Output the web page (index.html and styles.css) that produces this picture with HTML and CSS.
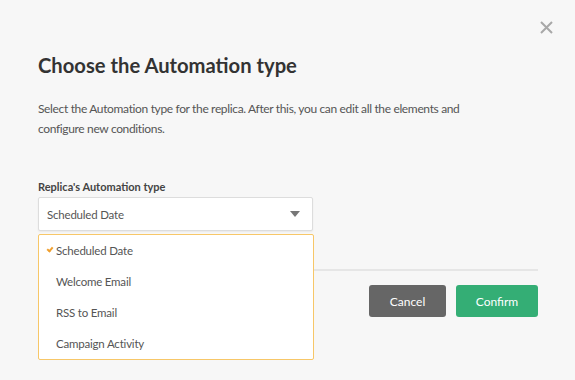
FILE: index.html
```html
<!DOCTYPE html>
<html>
<head>
    <title>Choose the Automation type</title>
<link rel="stylesheet" href="styles.css">
</head>
<body>

<div class="modal">
  <span class="close">
    <svg width="13" height="13" viewBox="0 0 13 13">
      <path d="M1 1 L12 12 M12 1 L1 12" stroke="#a8a8a8" stroke-width="2" fill="none"/>
    </svg>
  </span>

  <h1 class="modal-title">Choose the Automation type</h1>

  <p class="modal-text">Select the Automation type for the replica. After this, you can edit all the elements and configure new conditions.</p>

  <div class="field">
    <label class="field-label">Replica's Automation type</label>
    <div class="select">
      <span class="select-value">Scheduled Date</span>
      <span class="select-arrow"></span>

      <ul class="menu">
        <li class="menu-item selected">Scheduled Date</li>
        <li class="menu-item">Welcome Email</li>
        <li class="menu-item">RSS to Email</li>
        <li class="menu-item">Campaign Activity</li>
      </ul>
    </div>
  </div>

  <div class="modal-footer">
    <button class="btn btn-cancel">Cancel</button>
    <button class="btn btn-confirm">Confirm</button>
  </div>
</div>

</body>
</html>
```

FILE: styles.css
```css
html, body {
  height: 100%;
}

body {
  margin: 0;
  background-color: #f7f7f7;
  font-family: Lato, Arial, sans-serif;
  color: #555;
}

.modal {
  position: relative;
  min-height: 380px;
  box-sizing: border-box;
  padding: 48px 37px 0 38px;
}

.close {
  position: absolute;
  top: 21px;
  right: 22px;
  line-height: 0;
}

.modal-title {
  margin: 0;
  font-size: 20.2px;
  font-weight: 700;
  color: #333;
  line-height: 34px;
}

.modal-text {
  max-width: 432px;
  margin: 17px 0 0 0;
  font-size: 12px;
  letter-spacing: -0.35px;
  line-height: 20px;
  color: #555;
}

.field {
  margin-top: 41px;
}

.field-label {
  display: block;
  font-size: 11px;
  font-weight: 700;
  color: #444;
  line-height: 14px;
  margin-bottom: 3px;
}

.select {
  position: relative;
  width: 275px;
  height: 34px;
  box-sizing: border-box;
  background-color: #fff;
  border: 1px solid #ddd;
  border-radius: 2px;
  box-shadow: 0 1px 2px rgba(0, 0, 0, 0.06);
  display: flex;
  align-items: center;
  padding: 0 0 0 8px;
}

.select-value {
  flex: 1;
  font-size: 11.5px;
  letter-spacing: -0.2px;
}

.select-arrow {
  width: 0;
  height: 0;
  border-left: 5px solid transparent;
  border-right: 5px solid transparent;
  border-top: 6px solid #777;
  margin-right: 12px;
}

.menu {
  position: absolute;
  top: 36px;
  left: -1px;
  width: 276px;
  box-sizing: border-box;
  margin: 0;
  padding: 0;
  list-style: none;
  background-color: #fff;
  border: 1px solid #f7c768;
  border-radius: 2px;
  z-index: 2;
}

.menu-item {
  position: relative;
  height: 31px;
  line-height: 31px;
  padding-left: 17px;
  font-size: 11.5px;
  letter-spacing: -0.2px;
  color: #555;
}

.menu-item.selected::before {
  content: "";
  position: absolute;
  left: 9px;
  top: 11px;
  width: 2px;
  height: 4px;
  border-right: 2px solid #f0a030;
  border-bottom: 2px solid #f0a030;
  transform: rotate(40deg);
}

.modal-footer {
  margin-top: 38px;
  border-top: 2px solid #e6e6e6;
  padding-top: 14px;
  display: flex;
  justify-content: flex-end;
  gap: 10px;
}

.btn {
  height: 32px;
  border: none;
  border-radius: 3px;
  font-family: Lato, Arial, sans-serif;
  font-size: 12px;
  color: #fff;
  cursor: pointer;
}

.btn-cancel {
  width: 77px;
  background-color: #666;
}

.btn-confirm {
  width: 82px;
  background-color: #34ae75;
}
```
